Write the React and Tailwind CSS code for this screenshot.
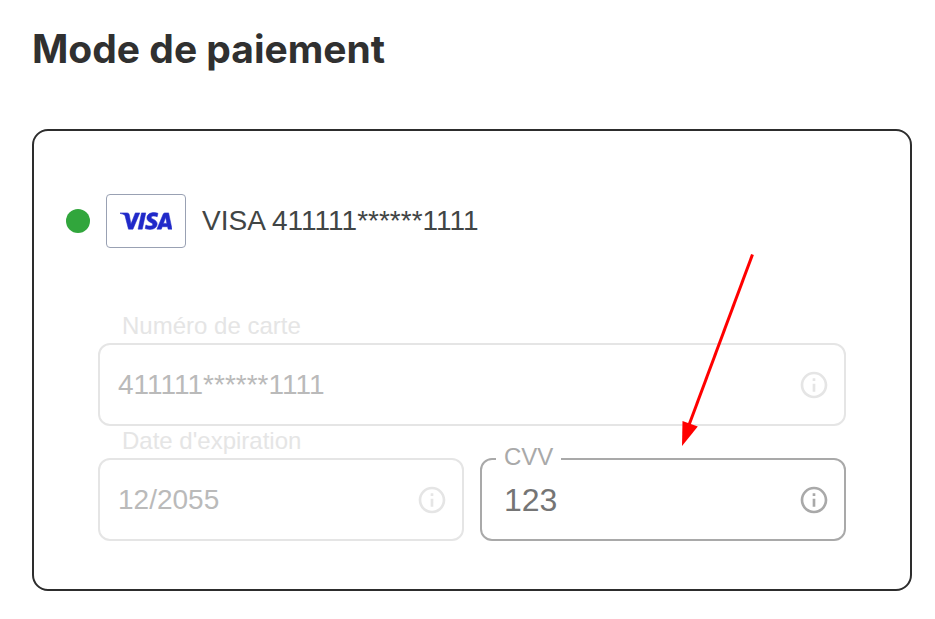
import { useState } from "react";
import { SiVisa } from "react-icons/si";

function InfoIcon() {
  return (
    <svg viewBox="0 0 24 24" fill="currentColor" className="size-8" aria-hidden="true">
      <path d="M11 7h2v2h-2zM11 11h2v6h-2zM12 2C6.48 2 2 6.48 2 12s4.48 10 10 10 10-4.48 10-10S17.52 2 12 2zm0 18c-4.41 0-8-3.59-8-8s3.59-8 8-8 8 3.59 8 8-3.59 8-8 8z" />
    </svg>
  );
}

function DisabledField({ id, label, value }) {
  return (
    <div className="min-w-0">
      <label htmlFor={id} className="block h-8 px-6 text-2xl leading-[30px] text-[#e5e5e5]">
        {label}
      </label>
      <div className="flex h-[83px] items-center rounded-xl border-2 border-[#e5e5e5] pr-3.5 pl-4">
        <input
          id={id}
          value={value}
          disabled
          className="min-w-0 flex-1 bg-transparent px-0.5 text-[28px] leading-8 text-[#bababa]"
        />
        <span className="shrink-0 text-[#e5e5e5]">
          <InfoIcon />
        </span>
      </div>
    </div>
  );
}

export default function App() {
  const [cvv, setCvv] = useState("123");

  return (
    <main className="min-h-screen bg-white pt-6 pr-[23px] pb-7 pl-8 font-['Liberation_Sans',Arial,sans-serif]">
      <h1 className="font-['Inter',sans-serif] text-[39px] leading-[50px] font-bold text-[#303030]">
        Mode de paiement
      </h1>

      <section className="relative mt-[55px] rounded-2xl border-2 border-[#2d2d2d] px-8 pt-[63px] pb-12">
        <div className="flex items-center gap-4">
          <span className="size-6 rounded-full bg-[#31a63c]" />
          <span className="flex h-[54px] w-20 items-center justify-center rounded border border-[#99a1b3]">
            <SiVisa className="size-[52px] text-[#2029c9] [stroke-width:0.25]" aria-label="Visa" />
          </span>
          <span className="text-[28px] leading-8 text-[#414545]">VISA 411111******1111</span>
        </div>

        <form className="mt-[63px] px-8">
          <DisabledField id="card-number" label="Numéro de carte" value="411111******1111" />
          <div className="grid grid-cols-2 items-end gap-4">
            <DisabledField id="expiry" label="Date d'expiration" value="12/2055" />
            <fieldset className="min-w-0 rounded-xl border-2 border-[#a9a9a9] px-3.5">
              <legend className="h-8 px-2 text-2xl leading-7 text-[#a9a9a9]">
                <label htmlFor="cvv">CVV</label>
              </legend>
              <div className="flex h-16 items-center pb-3.5 pl-2">
                <input
                  id="cvv"
                  value={cvv}
                  onChange={(e) => setCvv(e.target.value)}
                  inputMode="numeric"
                  className="min-w-0 flex-1 bg-transparent text-[32px] leading-10 text-[#757575] outline-none"
                />
                <button type="button" aria-label="Aide CVV" className="shrink-0 text-[#a9a9a9]">
                  <InfoIcon />
                </button>
              </div>
            </fieldset>
          </div>
        </form>

        <svg
          className="pointer-events-none absolute top-[122px] right-[140px] h-[196px] w-[92px]"
          viewBox="678 253 92 196"
          aria-hidden="true"
        >
          <path d="M752.5 254.5 689 425" stroke="#ff0000" strokeWidth="3" fill="none" />
          <path d="M682 446 682.5 421 697.8 426.5Z" fill="#ff0000" />
        </svg>
      </section>
    </main>
  );
}
